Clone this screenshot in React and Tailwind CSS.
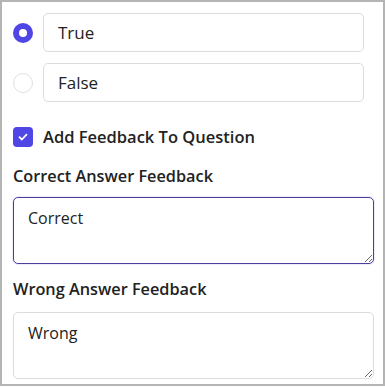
import React from "react";

function Radio({ checked }) {
  return checked ? (
    <span className="flex h-5 w-5 shrink-0 items-center justify-center rounded-full bg-[#4f46e5]">
      <span className="h-2 w-2 rounded-full bg-white" />
    </span>
  ) : (
    <span className="h-5 w-5 shrink-0 rounded-full border border-[#e0e0e0] bg-white" />
  );
}

function Option({ label, checked }) {
  return (
    <div className="flex items-center gap-[10px] pr-[10px]">
      <Radio checked={checked} />
      <input
        readOnly
        value={label}
        className="h-[39px] w-full rounded-[5px] border border-[#dcdcdc] bg-white px-[14px] text-[17px] text-[#222] outline-none"
      />
    </div>
  );
}

export default function App() {
  return (
    <div
      className="h-[386px] w-[385px] border-2 border-[#b4b4b4] bg-white pl-[11px] pr-[9px] pt-[11px]"
      style={{ fontFamily: '"Open Sans", "Noto Sans", sans-serif' }}
    >
      <div className="flex flex-col gap-[11px]">
        <Option label="True" checked />
        <Option label="False" />
      </div>
      <div className="mt-[23px] flex items-center gap-[10px]">
        <span className="flex h-5 w-5 items-center justify-center rounded-[4px] bg-[#4f46e5]">
          <svg width="12" height="12" viewBox="0 0 12 12" fill="none">
            <path d="M2.5 6.2l2.4 2.3 4.6-4.8" stroke="white" strokeWidth="1.8" strokeLinecap="round" strokeLinejoin="round" />
          </svg>
        </span>
        <span className="text-[16.5px] font-semibold text-[#222]">Add Feedback To Question</span>
      </div>
      <div className="mt-[14px] text-[16.3px] font-semibold text-[#222]">Correct Answer Feedback</div>
      <textarea
        readOnly
        defaultValue="Correct"
        className="mt-[9px] block h-[67px] w-full rounded-[5px] border border-[#4b3f9c] bg-white px-[14px] py-[8px] text-[16px] text-[#222] outline-none shadow-[0_0_0_1px_rgba(99,102,241,0.12)]"
      />
      <div className="mt-[13px] text-[16.3px] font-semibold text-[#222]">Wrong Answer Feedback</div>
      <textarea
        readOnly
        defaultValue="Wrong"
        className="mt-[10px] block h-[67px] w-full rounded-[5px] border border-[#dcdcdc] bg-white px-[14px] py-[8px] text-[16px] text-[#222] outline-none"
      />
    </div>
  );
}
